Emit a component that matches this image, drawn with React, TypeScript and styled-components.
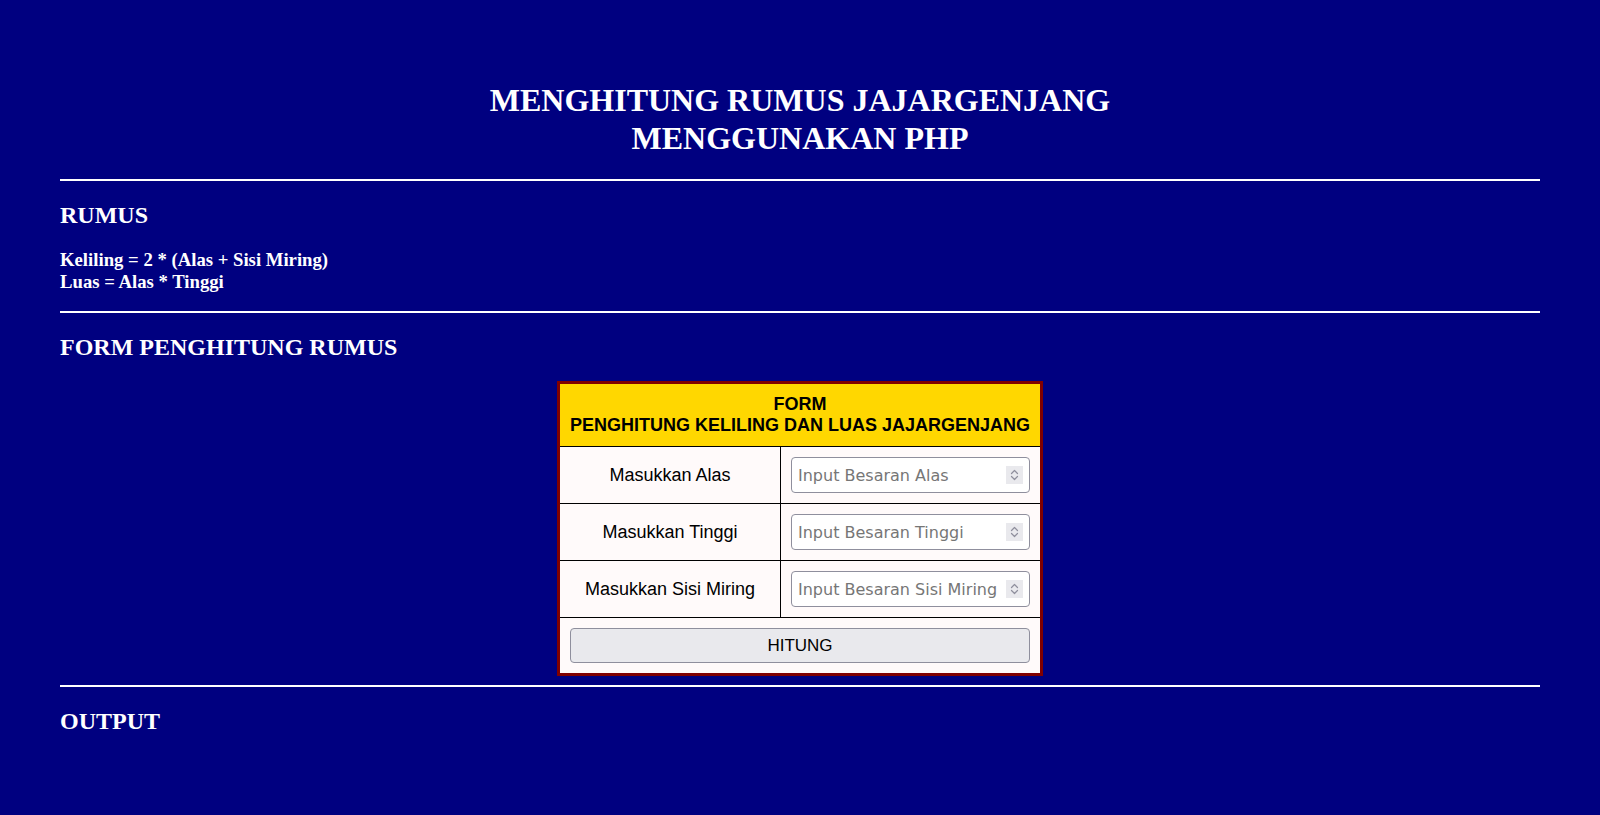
import React from "react";
import styled, { createGlobalStyle } from "styled-components";

const GlobalStyle = createGlobalStyle`
  html, body {
    margin: 0;
    padding: 0;
    background: #000080;
  }
  body {
    font-family: "Liberation Serif", "Times New Roman", serif;
    color: #ffffff;
  }
`;

const Page = styled.div`
  padding: 60px 60px 40px;
`;

const Title = styled.h1`
  margin: 21.44px 0;
  font-size: 32px;
  line-height: 38px;
  font-weight: bold;
  text-align: center;
`;

const Divider = styled.hr`
  border: 0;
  border-top: 2px solid #ffffff;
  height: 0;
  margin: 8px 0;
`;

const SectionTitle = styled.h2`
  margin: 19.92px 0;
  font-size: 24px;
  line-height: 28px;
  font-weight: bold;
`;

const Formula = styled.h3`
  margin: 18.72px 0;
  font-size: 18.72px;
  line-height: 22px;
  font-weight: bold;
`;

const FormTable = styled.table`
  margin: 0 auto 9px;
  width: 486px;
  border: 3px solid #800000;
  border-collapse: separate;
  border-spacing: 0;
  font-family: "Liberation Sans", Arial, sans-serif;
  color: #000000;
`;

const HeaderCell = styled.th`
  background: #ffd700;
  padding: 10px 2px;
  font-size: 18px;
  line-height: 21px;
  font-weight: bold;
  text-align: center;
  white-space: nowrap;
  border-bottom: 1px solid #000000;
`;

const LabelCell = styled.td`
  width: 220px;
  box-sizing: content-box;
  padding: 0;
  height: 56px;
  background: #fffafa;
  font-size: 18px;
  text-align: center;
  border-right: 1px solid #000000;
  border-bottom: 1px solid #000000;
`;

const InputCell = styled.td`
  padding: 10px;
  background: #fffafa;
  border-bottom: 1px solid #000000;
`;

const ButtonCell = styled.td`
  padding: 10px;
  background: #fffafa;
`;

const InputWrap = styled.div`
  position: relative;
  display: block;
`;

const NumberInput = styled.input`
  display: block;
  width: 100%;
  height: 36px;
  box-sizing: border-box;
  margin: 0;
  padding: 0 26px 0 6px;
  border: 1px solid #8f8f9d;
  border-radius: 4px;
  background: #ffffff;
  font-family: "DejaVu Sans", Verdana, sans-serif;
  font-size: 16px;
  color: #000000;
  outline: none;
  -moz-appearance: textfield;
  &::placeholder {
    color: #767676;
    opacity: 1;
  }
  &::-webkit-inner-spin-button,
  &::-webkit-outer-spin-button {
    -webkit-appearance: none;
    margin: 0;
  }
`;

const Spinner = styled.span`
  position: absolute;
  right: 7px;
  top: 9px;
  width: 17px;
  height: 18px;
  background: #e9e9ed;
  pointer-events: none;
  display: flex;
  align-items: center;
  justify-content: center;
`;

const SubmitButton = styled.button`
  display: block;
  width: 100%;
  height: 35px;
  margin: 0;
  border: 1px solid #8f8f9d;
  border-radius: 4px;
  background: #e9e9ed;
  font-family: "Liberation Sans", Arial, sans-serif;
  font-size: 17px;
  color: #000000;
  cursor: pointer;
`;

const SpinIcon = () => (
  <svg width="17" height="18" viewBox="0 0 17 18" fill="none">
    <path d="M5.5 7.5 L8.5 4.5 L11.5 7.5" stroke="#8f8f9d" strokeWidth="1.2" strokeLinecap="round" strokeLinejoin="round" />
    <path d="M5.5 10.5 L8.5 13.5 L11.5 10.5" stroke="#8f8f9d" strokeWidth="1.2" strokeLinecap="round" strokeLinejoin="round" />
  </svg>
);

const rows = [
  { label: "Masukkan Alas", placeholder: "Input Besaran Alas", name: "alas" },
  { label: "Masukkan Tinggi", placeholder: "Input Besaran Tinggi", name: "tinggi" },
  { label: "Masukkan Sisi Miring", placeholder: "Input Besaran Sisi Miring", name: "sisi" },
];

export default function App() {
  return (
    <>
      <GlobalStyle />
      <Page>
        <Title>
          MENGHITUNG RUMUS JAJARGENJANG
          <br />
          MENGGUNAKAN PHP
        </Title>
        <Divider />
        <SectionTitle>RUMUS</SectionTitle>
        <Formula>
          Keliling = 2 * (Alas + Sisi Miring)
          <br />
          Luas = Alas * Tinggi
        </Formula>
        <Divider />
        <SectionTitle>FORM PENGHITUNG RUMUS</SectionTitle>
        <form onSubmit={(e) => e.preventDefault()}>
          <FormTable>
            <thead>
              <tr>
                <HeaderCell colSpan={2}>
                  FORM
                  <br />
                  PENGHITUNG KELILING DAN LUAS JAJARGENJANG
                </HeaderCell>
              </tr>
            </thead>
            <tbody>
              {rows.map((r) => (
                <tr key={r.name}>
                  <LabelCell>{r.label}</LabelCell>
                  <InputCell>
                    <InputWrap>
                      <NumberInput type="number" name={r.name} placeholder={r.placeholder} />
                      <Spinner>
                        <SpinIcon />
                      </Spinner>
                    </InputWrap>
                  </InputCell>
                </tr>
              ))}
              <tr>
                <ButtonCell colSpan={2}>
                  <SubmitButton type="submit">HITUNG</SubmitButton>
                </ButtonCell>
              </tr>
            </tbody>
          </FormTable>
        </form>
        <Divider />
        <SectionTitle>OUTPUT</SectionTitle>
      </Page>
    </>
  );
}
